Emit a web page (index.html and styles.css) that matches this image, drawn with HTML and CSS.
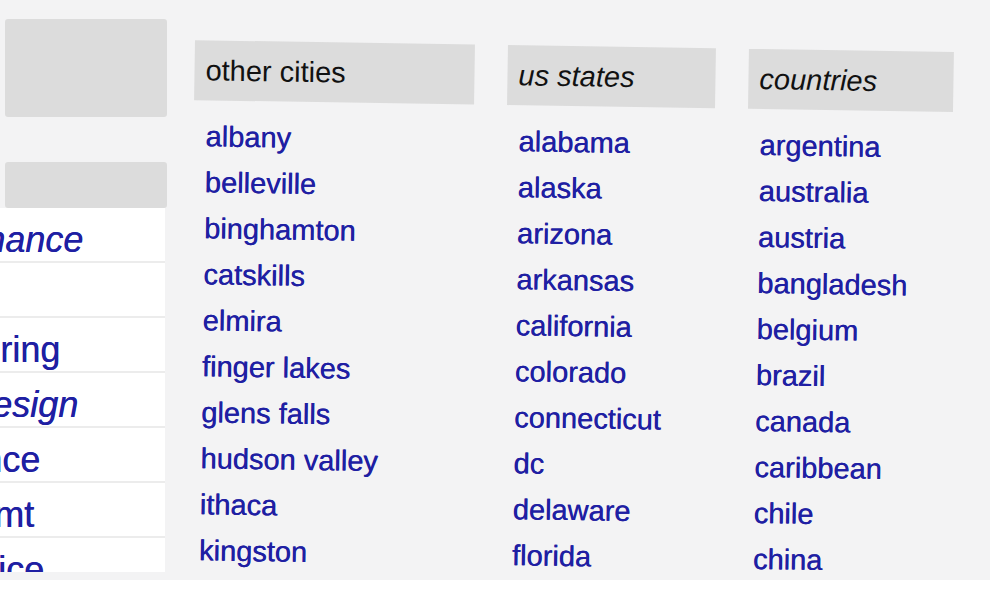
FILE: index.html
```html
<!DOCTYPE html>
<html>

<head>
    <title>craigslist - other cities</title>
    <link rel="stylesheet" href="styles.css">
</head>

<body>
    <div class="page">
        <div class="side">
            <div class="side-head"></div>
            <div class="side-bar"></div>
            <ul class="side-list">
                <li class="em"><a href="#">accounting+finance</a></li>
                <li><a href="#">admin / office</a></li>
                <li><a href="#">arch / engineering</a></li>
                <li class="em"><a href="#">art / media / design</a></li>
                <li><a href="#">biotech / science</a></li>
                <li><a href="#">business / mgmt</a></li>
                <li><a href="#">customer service</a></li>
            </ul>
        </div>

        <div class="panel">
            <div class="cols">
                <section class="col col-cities">
                    <h2 class="col-head">other cities</h2>
                    <ul>
                        <li><a href="#">albany</a></li>
                        <li><a href="#">belleville</a></li>
                        <li><a href="#">binghamton</a></li>
                        <li><a href="#">catskills</a></li>
                        <li><a href="#">elmira</a></li>
                        <li><a href="#">finger lakes</a></li>
                        <li><a href="#">glens falls</a></li>
                        <li><a href="#">hudson valley</a></li>
                        <li><a href="#">ithaca</a></li>
                        <li><a href="#">kingston</a></li>
                    </ul>
                </section>

                <section class="col col-states">
                    <h2 class="col-head em">us states</h2>
                    <ul>
                        <li><a href="#">alabama</a></li>
                        <li><a href="#">alaska</a></li>
                        <li><a href="#">arizona</a></li>
                        <li><a href="#">arkansas</a></li>
                        <li><a href="#">california</a></li>
                        <li><a href="#">colorado</a></li>
                        <li><a href="#">connecticut</a></li>
                        <li><a href="#">dc</a></li>
                        <li><a href="#">delaware</a></li>
                        <li><a href="#">florida</a></li>
                    </ul>
                </section>

                <section class="col col-countries">
                    <h2 class="col-head em">countries</h2>
                    <ul>
                        <li><a href="#">argentina</a></li>
                        <li><a href="#">australia</a></li>
                        <li><a href="#">austria</a></li>
                        <li><a href="#">bangladesh</a></li>
                        <li><a href="#">belgium</a></li>
                        <li><a href="#">brazil</a></li>
                        <li><a href="#">canada</a></li>
                        <li><a href="#">caribbean</a></li>
                        <li><a href="#">chile</a></li>
                        <li><a href="#">china</a></li>
                    </ul>
                </section>
            </div>
        </div>
    </div>
</body>

</html>
```

FILE: styles.css
```css
body {
    margin: 0;
    background-color: #fff;
    font-family: 'Liberation Sans', Arial, Helvetica, sans-serif;
    font-size: 29px;
}

a {
    color: #1f1fa3;
    text-decoration: none;
    text-shadow: 0.4px 0 0 currentColor;
}

.em {
    font-style: italic;
}

ul {
    list-style: none;
    margin: 0;
    padding: 0;
}

.page {
    display: flex;
    width: 990px;
    height: 580px;
    background-color: #f3f3f4;
    overflow: hidden;
}

/* left jobs column, cut off by the crop */
.side {
    width: 167px;
    flex-shrink: 0;
    padding-top: 19px;
}

.side-head {
    margin-left: 5px;
    height: 98px;
    background-color: #dcdcdc;
    border-radius: 3px;
}

.side-bar {
    margin: 45px 0 0 5px;
    height: 46px;
    background-color: #dcdcdc;
    border-radius: 3px;
}

.side-list {
    width: 165px;
    height: 364px;
    background-color: #fff;
    overflow: hidden;
}

.side-list li {
    height: 55px;
    box-sizing: border-box;
    border-bottom: 2px solid #ececec;
    font-size: 36px;
    line-height: 64px;
    white-space: nowrap;
    text-indent: -228px;
}

/* other cities / states / countries */
.panel {
    flex: 1;
}

.cols {
    display: flex;
    gap: 33px;
    padding: 45px 0 0 24px;
    transform: rotate(0.9deg);
    transform-origin: 333px 298px;
}

.col-cities {
    width: 280px;
}

.col-states {
    width: 208px;
}

.col-countries {
    width: 205px;
}

.col-head {
    margin: 0;
    height: 60px;
    line-height: 60px;
    padding-left: 11px;
    background-color: #dcdcdc;
    color: #111;
    font-size: 29px;
    font-weight: normal;
}

.col ul {
    margin-top: 13px;
    padding-left: 12px;
}

.col li {
    line-height: 46px;
    white-space: nowrap;
}
```
